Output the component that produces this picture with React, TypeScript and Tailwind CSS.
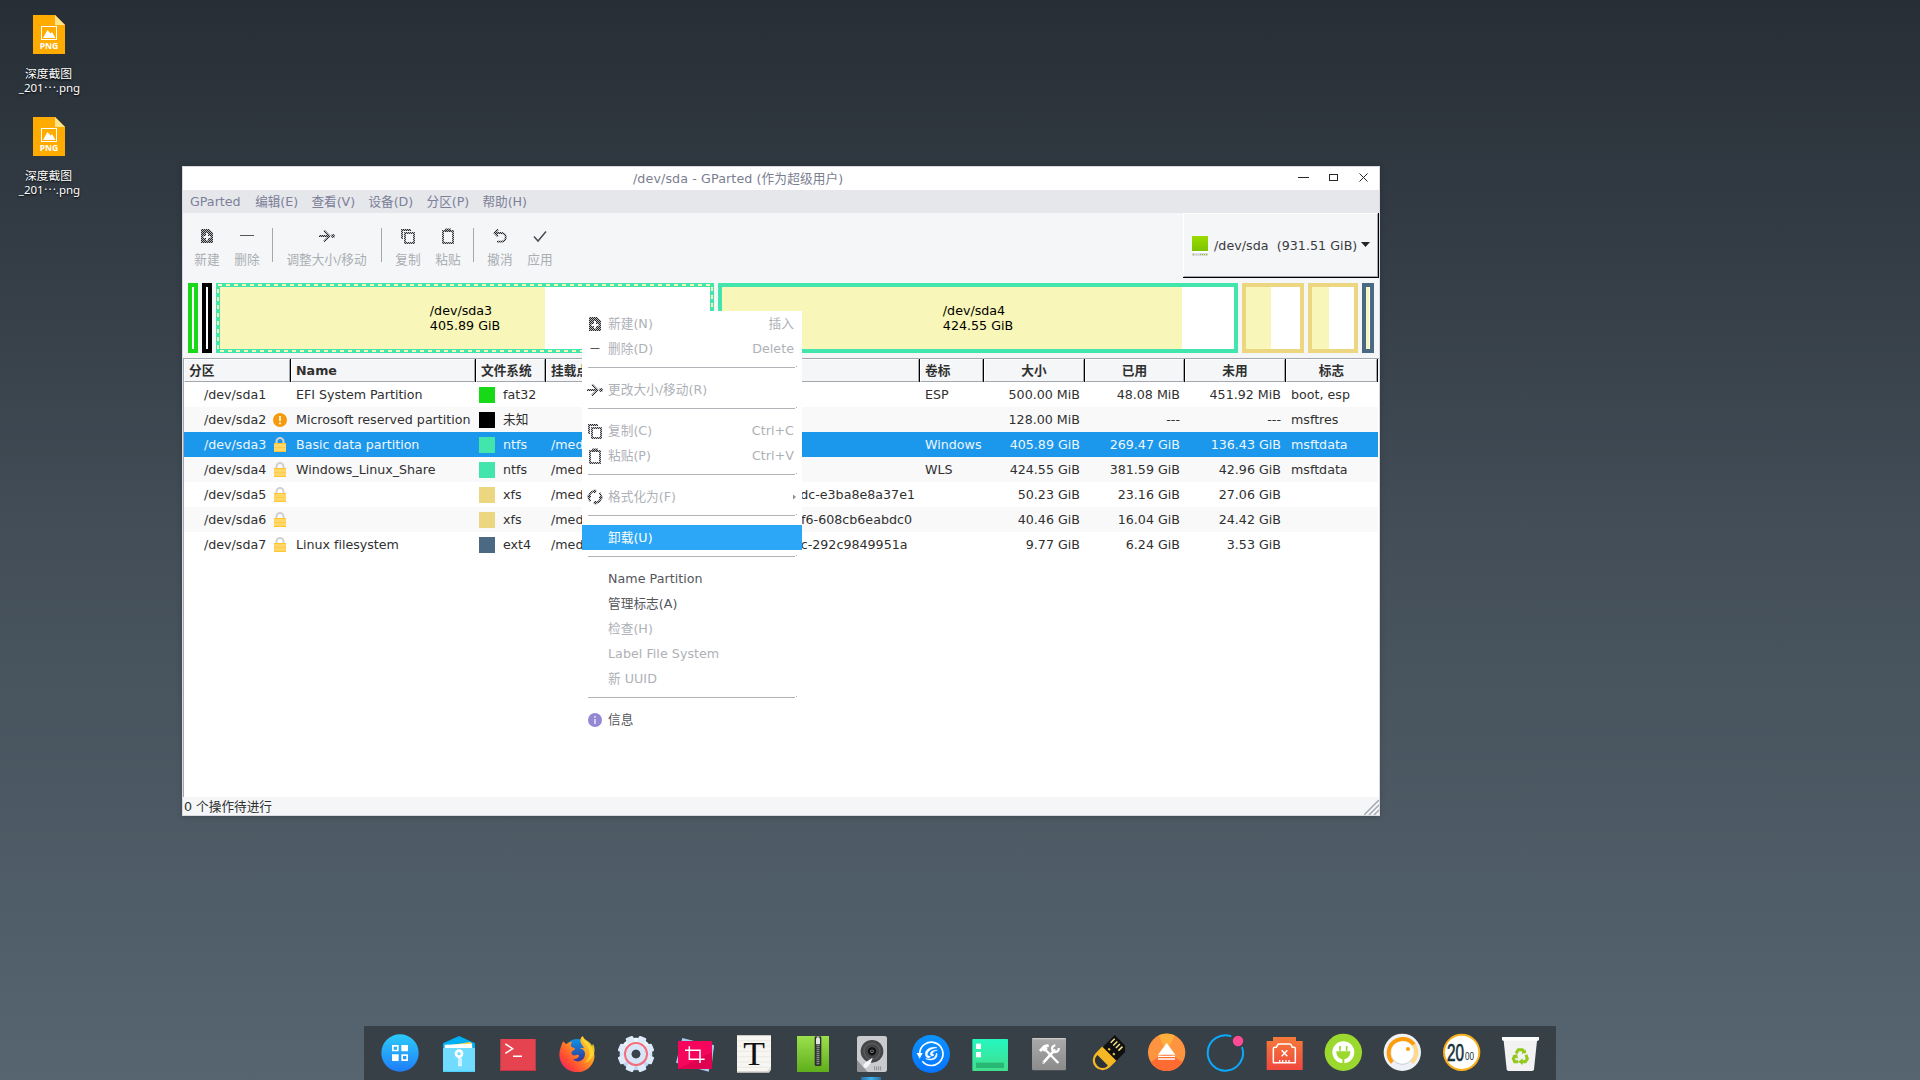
import React from "react";

const UI = "font-['DejaVu_Sans','Noto_Sans_CJK_SC',sans-serif] text-[12.67px]";

/* ---------- small icons ---------- */

function DitherDefs() {
  return (
    <svg className="absolute size-0">
      <defs>
        <pattern id="dither" width="2" height="2" patternUnits="userSpaceOnUse">
          <rect width="1" height="1" fill="#26262d" />
          <rect x="1" y="1" width="1" height="1" fill="#26262d" />
          <rect x="1" width="1" height="1" fill="#26262d" opacity=".3" />
          <rect y="1" width="1" height="1" fill="#26262d" opacity=".3" />
        </pattern>
      </defs>
    </svg>
  );
}

type Glyph = "new" | "minus" | "resize" | "copy" | "paste" | "undo" | "check" | "format";

function ToolIcon({ name, small }: { name: Glyph; small?: boolean }) {
  const s = { fill: "none", stroke: "url(#dither)", strokeWidth: 2 };
  return (
    <svg className="block size-4 shrink-0" viewBox="0 0 16 16">
      {name === "new" && (
        <path
          fillRule="evenodd"
          fill="url(#dither)"
          d="M2 1h8l4 4v10H2zM7 5v3H4.500v2H7v2.500h2V10h2.500V8H9V5z"
        />
      )}
      {name === "minus" && <path d={small ? "M3.500 7.500h9" : "M1 7.500h14"} stroke="#55555b" strokeWidth="1" />}
      {name === "resize" && (
        <g>
          <path {...s} strokeWidth="1.800" d="M0 8h10M5 2.500l5.500 5.500L5 13.500" />
          <circle cx="14" cy="8" r="1.900" fill="url(#dither)" />
        </g>
      )}
      {name === "copy" && (
        <g {...s} strokeWidth="1.800">
          <path d="M2 11V2h9" />
          <rect x="5" y="5" width="9" height="10" />
        </g>
      )}
      {name === "paste" && (
        <g {...s} strokeWidth="1.800">
          <rect x="3" y="3" width="10" height="12" />
          <path d="M6 4V1.500h4V4" />
        </g>
      )}
      {name === "undo" && (
        <g {...s} strokeWidth="1.800">
          <path d="M3 5h6.500a4.300 4.300 0 0 1 0 8.600H5M6 1.500L2.500 5 6 8.500" />
        </g>
      )}
      {name === "check" && <path d="M2 8.500l4 4.500L14 3.500" fill="none" stroke="#4c4c52" strokeWidth="1.500" />}
      {name === "format" && (
        <g {...s} strokeWidth="1.900">
          <path d="M3.500 12.200A6 6 0 0 1 8.500 2.200M12.500 3.800A6 6 0 0 1 7.500 13.800" />
          <path d="M7 .5l2 1.700-2 1.700M9 12.100l-2 1.700 2 1.700" strokeWidth="1.300" />
          <path d="M0 7.500h4M12 8.500h4" strokeWidth="1.500" />
        </g>
      )}
    </svg>
  );
}

function Lock() {
  return (
    <svg className="block h-[15px] w-[14px]" viewBox="0 0 14 15">
      <path d="M3.500 7V4.500a3.500 3.500 0 0 1 7 0V7" fill="none" stroke="#d0d0d2" strokeWidth="2" />
      <rect x="1" y="6" width="12" height="9" rx=".5" fill="#ffd768" />
      <path d="M1 6.500h12M1 14.500h12" stroke="#ffc52e" />
      <path d="M1 10.500h12" stroke="#ffca3d" opacity=".7" />
    </svg>
  );
}

function Warn() {
  return (
    <svg className="block size-[14px]" viewBox="0 0 14 14">
      <circle cx="7" cy="7" r="7" fill="#f59a0c" />
      <path d="M7 3v5M7 9.500v1.700" stroke="#fff" strokeWidth="1.700" />
    </svg>
  );
}

/* ---------- desktop ---------- */

function DesktopFile() {
  return (
    <div className="flex w-[98px] flex-col items-center">
      <svg className="block h-[39px] w-8" viewBox="0 0 32 39">
        <path d="M0 0h22l10 10v29H0z" fill="#ffab00" />
        <path d="M22 0l10 10H22z" fill="#ffe48a" />
        <rect x="8.500" y="11.500" width="15" height="13" fill="none" stroke="#fff" />
        <path d="M10 23l4.500-8 3 3.500 1.500-1.500 3.500 6z" fill="#fff" />
        <text x="16" y="34" textAnchor="middle" fill="#fff" fontSize="8.600" fontWeight="700" fontFamily="Noto Sans">
          PNG
        </text>
      </svg>
      <div className="mt-[11px] ml-px text-center font-['Noto_Sans','Noto_Sans_CJK_SC',sans-serif] text-[11.500px] leading-[15px] text-white [text-shadow:0_1px_2px_#000]">
        <div className="relative top-px right-px text-[11.800px]">深度截图</div>
        <div>
          _201<span className="relative -top-1 font-['Noto_Sans_CJK_SC',sans-serif]">⋯</span>.png
        </div>
      </div>
    </div>
  );
}

/* ---------- window parts ---------- */

const menus = ["编辑(E)", "查看(V)", "设备(D)", "分区(P)", "帮助(H)"];

function Tool({ icon, label, w }: { icon: Glyph; label: string; w: string }) {
  return (
    <div className={`flex flex-col items-center ${w}`}>
      <ToolIcon name={icon} />
      <div className="mt-[7px] leading-[17px] whitespace-nowrap">{label}</div>
    </div>
  );
}

function ToolSep() {
  return <div className="h-[34px] w-px bg-[#a3a8b0]" />;
}

function Part({ w, border, used, inner, children }: { w: string; border: string; used?: string; inner?: string; children?: React.ReactNode }) {
  return (
    <div className={`relative h-[70px] border-4 bg-white ${w} ${border}`}>
      <div className={`h-full ${used ?? ""} ${inner ?? "bg-[#f8f6b8]"}`} />
      {children}
    </div>
  );
}

function PartLabel({ a, b }: { a: string; b: string }) {
  return (
    <div className="absolute inset-0 flex items-center justify-center leading-[15px] text-black">
      <div>
        <div>{a}</div>
        <div>{b}</div>
      </div>
    </div>
  );
}

const GRID = "grid grid-cols-[107px_185px_70px_374px_64px_101px_100px_101px_92px]";

const headers: [string, boolean][] = [
  ["分区", false],
  ["Name", false],
  ["文件系统", false],
  ["挂载点", false],
  ["卷标", false],
  ["大小", true],
  ["已用", true],
  ["未用", true],
  ["标志", true],
];

interface Row {
  dev: string;
  icon?: "lock" | "warn";
  name: string;
  color: string;
  fs: string;
  mount?: string;
  tail?: string;
  tailPad?: string;
  label: string;
  size: string;
  used: string;
  free: string;
  flags: string;
}

const rows: Row[] = [
  { dev: "/dev/sda1", name: "EFI System Partition", color: "bg-[#18d918]", fs: "fat32", label: "ESP", size: "500.00 MiB", used: "48.08 MiB", free: "451.92 MiB", flags: "boot, esp" },
  { dev: "/dev/sda2", icon: "warn", name: "Microsoft reserved partition", color: "bg-black", fs: "未知", label: "", size: "128.00 MiB", used: "---", free: "---", flags: "msftres" },
  { dev: "/dev/sda3", icon: "lock", name: "Basic data partition", color: "bg-[#42e5ac]", fs: "ntfs", mount: "/media", label: "Windows", size: "405.89 GiB", used: "269.47 GiB", free: "136.43 GiB", flags: "msftdata" },
  { dev: "/dev/sda4", icon: "lock", name: "Windows_Linux_Share", color: "bg-[#42e5ac]", fs: "ntfs", mount: "/media", label: "WLS", size: "424.55 GiB", used: "381.59 GiB", free: "42.96 GiB", flags: "msftdata" },
  { dev: "/dev/sda5", icon: "lock", name: "", color: "bg-[#edd680]", fs: "xfs", mount: "/media", tail: "dc-e3ba8e8a37e1", tailPad: "pr-[5px]", label: "", size: "50.23 GiB", used: "23.16 GiB", free: "27.06 GiB", flags: "" },
  { dev: "/dev/sda6", icon: "lock", name: "", color: "bg-[#edd680]", fs: "xfs", mount: "/media", tail: "f6-608cb6eabdc0", tailPad: "pr-[8px]", label: "", size: "40.46 GiB", used: "16.04 GiB", free: "24.42 GiB", flags: "" },
  { dev: "/dev/sda7", icon: "lock", name: "Linux filesystem", color: "bg-[#4b6983]", fs: "ext4", mount: "/media", tail: "c-292c9849951a", tailPad: "pr-[12.500px]", label: "", size: "9.77 GiB", used: "6.24 GiB", free: "3.53 GiB", flags: "" },
];

function TableRow({ r, i }: { r: Row; i: number }) {
  const tone = i === 2 ? "bg-[#1b98ec] text-[#eef6fd]" : i % 2 ? "bg-[#f9f9fa] text-[#303030]" : "bg-white text-[#303030]";
  return (
    <div className={`${GRID} h-[25px] items-center whitespace-nowrap leading-[25px] ${tone}`}>
      <div className="flex items-center pl-5">
        <span className="w-[69px]">{r.dev}</span>
        {r.icon === "lock" && <Lock />}
        {r.icon === "warn" && <Warn />}
      </div>
      <div className="pl-[5px] tracking-[-0.020px]">{r.name}</div>
      <div className="flex h-[25px] items-center pl-[3px]">
        <span className={`mr-2 size-4 ${r.color}`} />
        <span>{r.fs}</span>
      </div>
      <div className="flex justify-between pl-[5px]">
        <span>{r.mount}</span>
        <span className={r.tailPad}>{r.tail}</span>
      </div>
      <div className="pl-[5px]">{r.label}</div>
      <div className="pr-[5px] text-right">{r.size}</div>
      <div className="pr-[5px] text-right">{r.used}</div>
      <div className="pr-[5px] text-right">{r.free}</div>
      <div className="pl-[5px]">{r.flags}</div>
    </div>
  );
}

/* ---------- context menu ---------- */

function MenuSep() {
  return (
    <div className="flex h-4 items-start pt-[5px] pl-[6px]">
      <div className="mt-px h-px w-[207px] bg-[#b1b4b9]" />
      <div className="ml-px size-px bg-[#b1b4b9]" />
    </div>
  );
}

function MenuRow({ icon, label, accel, state = "off", sub, info }: { icon?: Glyph; label: string; accel?: string; state?: "off" | "on" | "hot"; sub?: boolean; info?: boolean }) {
  const tone = state === "hot" ? "bg-[#2ca7f8] text-white" : state === "on" ? "text-[#55565c]" : "text-[#aeb1b7]";
  return (
    <div className={`flex h-[25px] items-center pr-2 pl-[5px] leading-[25px] tracking-[0.040px] whitespace-nowrap ${tone}`}>
      <span className="mr-[5px] flex w-4 justify-center">
        {icon && <ToolIcon name={icon} small />}
        {info && (
          <svg className="block size-[14px]" viewBox="0 0 14 14">
            <circle cx="7" cy="7" r="7" fill="#9487d4" />
            <path d="M7 3v1.700M7 6v5" stroke="#e4e0f7" strokeWidth="1.600" />
          </svg>
        )}
      </span>
      <span className="flex-1">{label}</span>
      <span>{accel}</span>
      {sub && (
        <svg className="-mr-[3px] block h-[6px] w-1" viewBox="0 0 4 6">
          <path d="M0 .5L3 3 0 5.500z" fill="#8d8f95" />
        </svg>
      )}
    </div>
  );
}

function ContextMenu() {
  return (
    <div className="absolute top-[144px] left-[399px] h-[423px] w-[220px] bg-white">
      <MenuRow icon="new" label="新建(N)" accel="插入" />
      <MenuRow icon="minus" label="删除(D)" accel="Delete" />
      <MenuSep />
      <MenuRow icon="resize" label="更改大小/移动(R)" />
      <MenuSep />
      <MenuRow icon="copy" label="复制(C)" accel="Ctrl+C" />
      <MenuRow icon="paste" label="粘贴(P)" accel="Ctrl+V" />
      <MenuSep />
      <MenuRow icon="format" label="格式化为(F)" sub />
      <MenuSep />
      <MenuRow label="卸载(U)" state="hot" />
      <MenuSep />
      <MenuRow label="Name Partition" state="on" />
      <MenuRow label="管理标志(A)" state="on" />
      <MenuRow label="检查(H)" />
      <MenuRow label="Label File System" />
      <MenuRow label="新 UUID" />
      <MenuSep />
      <MenuRow info label="信息" state="on" />
    </div>
  );
}

/* ---------- window ---------- */

function GPartedWindow() {
  return (
    <div className={`relative mt-[166px] ml-[182px] flex h-[650px] w-[1198px] flex-col border border-[#d9d9e2] bg-[#f4f6f8] shadow-[0_1px_6px_rgba(0,0,0,0.18)] ${UI}`}>
      <div className="flex h-[23px] items-center justify-between bg-white pr-[11px] pl-[450px] text-[#7a7e90]">
        <span className="leading-[23px] tracking-[0.11px] whitespace-pre">/dev/sda - GParted (作为超级用户)</span>
        <svg className="block h-[11px] w-[71px]" viewBox="0 0 71 11" fill="none" stroke="#26262a">
          <path d="M1 4.500h11" />
          <rect x="32.500" y="1.500" width="8" height="6" />
          <path d="M62.500 .5l8 8M70.500 .5l-8 8" />
        </svg>
      </div>
      <div className="flex h-[23px] items-center bg-[#e6e7eb] pl-[7px] leading-[23px] text-[#7c8099]">
        <span className="mr-[14.500px]">GParted</span>
        <div className="flex gap-[13.400px] tracking-[-0.050px]">
          {menus.map((m) => (
            <span key={m}>{m}</span>
          ))}
        </div>
      </div>

      <div className="flex h-[65px] justify-between">
        <div className="flex pt-[15px] pl-[11px] text-[#abaeb3]">
          <Tool icon="new" label="新建" w="w-[26px]" />
          <Tool icon="minus" label="删除" w="ml-[14px] w-[26px]" />
          <div className="ml-3"><ToolSep /></div>
          <Tool icon="resize" label="调整大小/移动" w="ml-[12px] w-[83px]" />
          <div className="ml-[13px]"><ToolSep /></div>
          <Tool icon="copy" label="复制" w="ml-[13px] w-[26px]" />
          <Tool icon="paste" label="粘贴" w="ml-[14px] w-[26px]" />
          <div className="ml-3"><ToolSep /></div>
          <Tool icon="undo" label="撤消" w="ml-[13px] w-[26px]" />
          <Tool icon="check" label="应用" w="ml-[14px] w-[26px]" />
        </div>
        <div className="h-[65px] w-[196px] border-r border-b border-black">
          <div className="flex h-full items-center border border-t-white border-r-[#a3a8b0] border-b-[#a3a8b0] border-l-white pt-px pl-2 text-[#3a3a3e]">
            <svg className="block h-5 w-4" viewBox="0 0 16 20">
              <defs>
                <linearGradient id="drv" x1="0" y1="0" x2="0" y2="1">
                  <stop offset="0" stopColor="#9bdc00" />
                  <stop offset="1" stopColor="#7cc400" />
                </linearGradient>
              </defs>
              <rect width="16" height="15" fill="url(#drv)" />
              <rect y="15" width="16" height="2" fill="#fff" />
              <rect y="17" width="16" height="3" fill="#d9dbdc" />
              <path d="M1 18.500h1M8 18.500h1M10 18.500h1M12 18.500h1M14 18.500h1" stroke="#7cc400" />
            </svg>
            <span className="ml-[6px] tracking-[0.040px] whitespace-pre">{"/dev/sda  (931.51 GiB)"}</span>
            <svg className="mb-[3px] ml-[4px] block h-[5px] w-[9px] shrink-0" viewBox="0 0 9 5">
              <path d="M0 0h9L4.500 5z" fill="#26262a" />
            </svg>
          </div>
        </div>
      </div>

      <div className="flex gap-1 pt-[5px] pl-[5px]">
        <Part w="w-[10px]" border="border-[#18d918]" inner="bg-white" />
        <Part w="w-[10px]" border="border-black" inner="bg-white" />
        <Part w="w-[498px]" border="border-[#42e5ac]" used="w-[325px]">
          <svg className="absolute -top-1 -left-1 block h-[70px] w-[498px]" viewBox="0 0 498 70">
            <rect x="2" y="2" width="494" height="66" fill="none" stroke="#f8f6b8" strokeWidth="2" strokeDasharray="4 4" />
          </svg>
          <PartLabel a="/dev/sda3" b="405.89 GiB" />
        </Part>
        <Part w="w-[520px]" border="border-[#42e5ac]" used="w-[460px]">
          <PartLabel a="/dev/sda4" b="424.55 GiB" />
        </Part>
        <Part w="w-[62px]" border="border-[#edd680]" used="w-[25px]" />
        <Part w="w-[50px]" border="border-[#edd680]" used="w-[17px]" />
        <Part w="w-[12px]" border="border-[#4b6983]" used="w-[3px]" />
      </div>

      <div className="mt-[5px] h-[439px] border-t border-l border-[#a3a8b0] bg-white">
        <div className={`${GRID} h-[23px] bg-[#f4f6f8] font-bold text-[#303030]`}>
          {headers.map(([h, center]) => (
            <div key={h} className="overflow-hidden border-r border-black">
              <div className={`h-[23px] border border-t-white border-r-[#a3a8b0] border-b-[#a3a8b0] border-l-white leading-[22px] whitespace-nowrap ${center ? "text-center" : "pl-1"}`}>
                {h}
              </div>
            </div>
          ))}
        </div>
        {rows.map((r, i) => (
          <div key={r.dev} className="w-[1194px]">
            <TableRow r={r} i={i} />
          </div>
        ))}
      </div>

      <div className="flex h-[18px] justify-between pl-px text-[#303030]">
        <span className="leading-[19px]">0 个操作待进行</span>
        <svg className="mt-[3px] block size-[15px]" viewBox="0 0 15 15">
          <path d="M0 15L15 0M5 15L15 5M10 15l5-5" stroke="#a3a8b0" strokeWidth="1.500" />
        </svg>
      </div>

      <ContextMenu />
    </div>
  );
}

/* ---------- dock ---------- */

function petals(n: number, cx: number, cy: number) {
  return Array.from({ length: n }, (_, k) => `rotate(${(k * 360) / n} ${cx} ${cy})`);
}

const dock: { box: string; active?: boolean; art: React.ReactNode }[] = [
  {
    box: "30 18 177 162",
    art: (
      <g>
        <linearGradient id="launch" x1="0" y1="0" x2="0" y2="1">
          <stop offset="0" stopColor="#2ccbf8" />
          <stop offset="1" stopColor="#1f7dfb" />
        </linearGradient>
        <circle cx="120" cy="99" r="56" fill="url(#launch)" />
        <path fill="#fff" fillRule="evenodd" d="M96 75h20v19H96zm5 5v9h10v-9zM124 75h20v19h-20zM96 103h20v20H96zM124 103h20v20h-20zm5 5v10h10v-10z" />
      </g>
    ),
  },
  {
    box: "207 18 177 162",
    art: (
      <g>
        <path d="M249 70l48-22 48 22v84h-96z" fill="#00b0f5" />
        <path d="M256 78l74-12 6 4 6 80z" fill="#ffd24d" />
        <path d="M254 74l82-3v20h-82z" fill="#fff" />
        <path d="M249 84h96v72h-96z" fill="#71dcff" />
        <path d="M249 152h96v4h-96z" fill="#4fd0fa" />
        <path d="M297 110v26h6v-22" fill="none" stroke="#dff7ff" strokeWidth="5" />
        <circle cx="297" cy="101" r="9" fill="none" stroke="#fff" strokeWidth="8" />
      </g>
    ),
  },
  {
    box: "384 18 177 162",
    art: (
      <g>
        <rect x="421" y="57" width="106" height="96" fill="#e5434f" />
        <rect x="421" y="150" width="106" height="3" fill="#c73340" />
        <path d="M436 72l22 14-22 14M459 109h27" fill="none" stroke="#fff" strokeWidth="4.500" />
      </g>
    ),
  },
  {
    box: "561 18 177 162",
    art: (
      <g>
        <linearGradient id="fox" x1="1" y1="0" x2="0" y2="1">
          <stop offset="0" stopColor="#fff04a" />
          <stop offset=".4" stopColor="#ff9a1f" />
          <stop offset=".75" stopColor="#ff4437" />
          <stop offset="1" stopColor="#e31587" />
        </linearGradient>
        <linearGradient id="globe" x1="0" y1="0" x2="0" y2="1">
          <stop offset="0" stopColor="#0a93e8" />
          <stop offset="1" stopColor="#3c2c8c" />
        </linearGradient>
        <circle cx="651" cy="94" r="37" fill="url(#globe)" />
        <path
          fill="url(#fox)"
          d="M609 64c4 3 6 7 10 8 7-5 12-7 18-7-4 5-5 8-4 14 4 5 12 4 12 8-1 4-9 5-11 11 1 8 8 10 15 7 7-3 9 1 7 5-5 6-11 8-17 6 8 12 27 11 34-4 6-14-1-25-14-27 5-3 9-2 13 0-3-10-11-12-11-24 0-7 4-11 8-13 0 12 11 15 20 26 15 19 19 36 9 55-12 23-33 29-54 27-27-4-45-24-46-51 0-16 6-27 11-41z"
        />
        <path d="M668 48c-5 14 8 20 15 31 12 20 4 40-11 50 28-9 39-36 27-58-1 3-2 5-3 7-5-15-24-17-28-30z" fill="#ffd92b" opacity=".85" />
      </g>
    ),
  },
  {
    box: "738 18 177 162",
    art: (
      <g>
        <linearGradient id="gear" x1="0" y1="0" x2="0" y2="1">
          <stop offset="0" stopColor="#f0f8ff" />
          <stop offset="1" stopColor="#b9d0f2" />
        </linearGradient>
        <circle cx="828" cy="102" r="35" fill="none" stroke="url(#gear)" strokeWidth="28" />
        {petals(8, 828, 102).map((t) => (
          <rect key={t} x="816" y="47" width="24" height="20" rx="4" fill="#dceafa" transform={`${t} rotate(22.500 828 102)`} />
        ))}
        <circle cx="828" cy="102" r="33" fill="none" stroke="#f76c78" strokeWidth="6" />
        <circle cx="828" cy="102" r="21" fill="none" stroke="#d8e5f7" strokeWidth="16" />
        <circle cx="828" cy="102" r="13" fill="#39434c" />
      </g>
    ),
  },
  {
    box: "915 18 177 162",
    art: (
      <g>
        <path d="M967 54l95 24-16 77-98-27z" fill="#a7c9ef" />
        <path d="M1062 76l-8 70-20-80z" fill="#a7c9ef" />
        <rect x="954" y="63" width="102" height="84" rx="2" fill="#f5055c" />
        <path d="M954 147l102-50v50z" fill="#df0050" />
        <path d="M988 79v39h46M975 91h45v38" fill="none" stroke="#fff" strokeWidth="4.500" />
      </g>
    ),
  },
  {
    box: "-78 18 177 162",
    art: (
      <g>
        <path d="M-39 46H63v98l-10 12H-39z" fill="#f7f6f2" />
        <path d="M-39 62H63M-39 78H63M-39 94H63M-39 110H63M-39 126H63M-39 142H63" stroke="#e6e4dc" strokeWidth="2" />
        <path d="M-39 153H51L63 142V150l-6 8H-39z" fill="#dad8d2" />
        <text x="12" y="136" textAnchor="middle" fontFamily="Liberation Serif" fontSize="101" fill="#101010" textLength="65" lengthAdjust="spacingAndGlyphs">
          T
        </text>
      </g>
    ),
  },
  {
    box: "99 18 177 162",
    art: (
      <g>
        <linearGradient id="zip" x1="0" y1="0" x2="0" y2="1">
          <stop offset="0" stopColor="#9be04c" />
          <stop offset="1" stopColor="#5fae1b" />
        </linearGradient>
        <rect x="141" y="48" width="96" height="108" fill="url(#zip)" />
        <rect x="194" y="49" width="20" height="89" rx="4" fill="#2e3130" />
        <path d="M204 76v58" stroke="#a5a8a8" strokeWidth="9" strokeDasharray="3 3" />
        <rect x="198" y="54" width="12" height="19" rx="2" fill="#e3e3e3" />
        <rect x="200" y="49" width="8" height="5" fill="#bbb" />
      </g>
    ),
  },
  {
    box: "276 18 177 162",
    active: true,
    art: (
      <g>
        <rect x="321" y="48" width="90" height="108" rx="7" fill="#c9cbce" />
        <path d="M321 120l32 36h-25a7 7 0 0 1-7-7z" fill="#8f9194" />
        <circle cx="366" cy="94" r="34" fill="#434547" />
        <circle cx="366" cy="94" r="24" fill="none" stroke="#56585a" strokeWidth="5" />
        <circle cx="366" cy="94" r="9" fill="#8b8d8f" stroke="#111" strokeWidth="7" />
        <circle cx="366" cy="94" r="3" fill="#111" />
        <path d="M368 113c-10 6-19 11-27 20a7 7 0 0 0 9 10c9-7 14-18 18-30z" fill="#f4f5f6" />
        <path d="M374 139v12M380 139v12M386 139v12M392 139v12" stroke="#8c8e91" strokeWidth="3" />
      </g>
    ),
  },
  {
    box: "453 18 177 162",
    art: (
      <g>
        <linearGradient id="restore" x1="0" y1="0" x2="0" y2="1">
          <stop offset="0" stopColor="#0b93ff" />
          <stop offset="1" stopColor="#0574ff" />
        </linearGradient>
        <circle cx="543" cy="102" r="57" fill="url(#restore)" />
        <path d="M509 99a35 35 0 1 1 8 25" fill="none" stroke="#fff" strokeWidth="5" />
        <path d="M500 99h18l-9 17z" fill="#fff" />
        <g fill="#fff" stroke="#fff" strokeWidth="1.500">
          <path d="M561 83c-22-5-39 8-34 24 3 8 12 9 15 2-10 1-13-7-7-14 6-8 15-11 26-12z" />
          <path d="M562 91c-13-1-22 4-21 12 1 6 9 7 11 1-6 0-6-5-2-8 3-3 7-4 12-5z" />
          <path d="M560 99c6 13-9 28-33 17 13 3 24 0 28-6 2-3 3-7 5-11z" />
        </g>
      </g>
    ),
  },
  {
    box: "630 18 177 162",
    art: (
      <g>
        <linearGradient id="dm" x1="0" y1="0" x2="0" y2="1">
          <stop offset="0" stopColor="#25f7c0" />
          <stop offset="1" stopColor="#42de8c" />
        </linearGradient>
        <rect x="667" y="57" width="107" height="96" rx="2" fill="url(#dm)" />
        <rect x="678" y="71" width="15" height="16" fill="#fff" />
        <rect x="678" y="96" width="15" height="16" fill="#fff" />
        <rect x="678" y="128" width="84" height="16" fill="#28b873" />
      </g>
    ),
  },
  {
    box: "807 18 177 162",
    art: (
      <g>
        <linearGradient id="tools" x1="0" y1="0" x2="0" y2="1">
          <stop offset="0" stopColor="#aaa" />
          <stop offset="1" stopColor="#8b8b8b" />
        </linearGradient>
        <rect x="846" y="54" width="102" height="97" rx="4" fill="url(#tools)" />
        <rect x="847" y="54" width="100" height="4" rx="2" fill="#c9c9c9" />
        <g fill="none" stroke="#fff">
          <path d="M880 128l33-37" strokeWidth="8" strokeLinecap="round" />
          <path d="M926 84a10 10 0 1 1-10-8" strokeWidth="7" />
          <path d="M887 90l38 39" strokeWidth="7" />
          <path d="M870 93l14-14 12-3M880 92l10-10" strokeWidth="9" />
        </g>
        <circle cx="879" cy="128" r="2.500" fill="#999" />
      </g>
    ),
  },
  {
    box: "984 18 177 162",
    art: (
      <g transform="rotate(45 1075 101)">
        <path d="M1049 48h44l14 14v43h-58z" fill="#101010" />
        <path d="M1047 99h60v28a30 30 0 0 1-60 0z" fill="#f5b825" />
        <path d="M1055 131a22 19 0 0 0 44 0v-4h-44z" fill="#2d3236" />
        <path d="M1057 56v17M1068 56v17M1079 56v17M1090 56v17" stroke="#f3e491" strokeWidth="4.500" />
        <path d="M1064 87h7v6h-7zM1084 87h7v6h-7z" fill="#e9c94c" />
      </g>
    ),
  },
  {
    box: "-9 18 177 162",
    art: (
      <g>
        <circle cx="80" cy="97" r="56" fill="#ff9440" />
        <path d="M80 97L56 46a56 56 0 0 1 48 0z" fill="#ffb03c" />
        <path d="M80 97L32 126a56 56 0 0 0 96 0z" fill="#ff6b30" />
        <path d="M80 69l26 35H54zM54 107h51v4H54zM54 115h51v4H54z" fill="#fff" />
      </g>
    ),
  },
  {
    box: "168 18 177 162",
    art: (
      <g>
        <path d="M274 49a53 53 0 1 0 32 32" fill="none" stroke="#0aa9fb" strokeWidth="6" />
        <circle cx="294" cy="63" r="15.500" fill="#ff4b96" />
      </g>
    ),
  },
  {
    box: "345 18 177 162",
    art: (
      <g>
        <linearGradient id="cap" x1="0" y1="0" x2="0" y2="1">
          <stop offset="0" stopColor="#f47b39" />
          <stop offset="1" stopColor="#f1473f" />
        </linearGradient>
        <path d="M399 51h69v12h20v87H380V63h19z" fill="url(#cap)" />
        <path d="M400 128V86q0-4 4-4h5l4-8q1-2 4-2h32q3 0 4 2l4 8h5q4 0 4 4v42z" fill="none" stroke="#fff" strokeWidth="4.500" strokeLinejoin="round" />
        <path d="M419 127v-7M428 127v-7M438 127v-7M447 127v-7" stroke="#fff" strokeWidth="4" />
        <path d="M425 91l17 18M442 91l-17 18" stroke="#fff" strokeWidth="4.500" />
      </g>
    ),
  },
  {
    box: "522 18 177 162",
    art: (
      <g>
        <circle cx="610" cy="97" r="56" fill="#9bd92f" />
        <circle cx="610" cy="97" r="33" fill="#fff" />
        <path d="M600 78v14M620 78v14" stroke="#9bd92f" strokeWidth="5" />
        <path d="M589 94h42c0 14-8 22-18 24v14h-6v-14c-10-2-18-10-18-24z" fill="#9bd92f" />
      </g>
    ),
  },
  {
    box: "699 18 177 162",
    art: (
      <g>
        <circle cx="787" cy="97" r="56" fill="#eef1f6" />
        <path d="M757 127a42 42 0 1 1 65-53" fill="none" stroke="#ff9c0a" strokeWidth="12" />
        <path d="M822 74a42 42 0 0 1-7 54" fill="none" stroke="#ffd98a" strokeWidth="12" />
        <circle cx="787" cy="101" r="33" fill="#c8ccd4" />
        <circle cx="787" cy="98" r="33" fill="#fff" />
        <circle cx="804" cy="87" r="6" fill="#ff9c0a" />
      </g>
    ),
  },
  {
    box: "876 18 177 162",
    art: (
      <g fontFamily="Liberation Sans" fill="#12303a">
        <circle cx="965" cy="97" r="53" fill="#fff" stroke="#f8b01c" strokeWidth="6" />
        <text x="921" y="122" fontSize="69" textLength="51" lengthAdjust="spacingAndGlyphs" stroke="#12303a" strokeWidth="2">
          20
        </text>
        <text x="975" y="121" fontSize="34" textLength="27" lengthAdjust="spacingAndGlyphs">
          00
        </text>
      </g>
    ),
  },
  {
    box: "1053 18 177 162",
    art: (
      <g>
        <path d="M1086 51h111v7q0 5-6 5h-99q-6 0-6-5z" fill="#fbfbfb" />
        <path d="M1091 62h100l-9 86q-1 5-6 5h-70q-5 0-6-5z" fill="#f2f2f2" />
        <g fill="none" stroke="#93c81c" strokeWidth="9">
          <path d="M1128 100l7-11h12l5 9" />
          <path d="M1158 104l4 12-6 9h-11" />
          <path d="M1135 125h-11l-4-9 6-10" />
        </g>
        <path d="M1145 101l14-2-3-12zM1148 115v20l-13-10zM1116 108l15-6 3 14z" fill="#93c81c" />
      </g>
    ),
  },
];

function Dock() {
  return (
    <div className="flex h-[54px] w-[1192px] bg-[#384047] px-[6px]">
      {dock.map((d, i) => (
        <div key={i} className="relative h-[54px] w-[59px]">
          <svg className="block h-[54px] w-[59px]" viewBox={d.box}>
            {d.art}
          </svg>
          {d.active && <div className="absolute bottom-0 left-[19px] h-[3px] w-5 bg-linear-to-r from-[#2c6f9e] via-[#3fb0f0] to-[#2c6f9e]" />}
        </div>
      ))}
    </div>
  );
}

export default function App() {
  return (
    <div className="relative flex h-[1080px] w-[1920px] flex-col overflow-hidden bg-linear-to-b from-[#272e36] via-[#434e58] to-[#566570]">
      <DitherDefs />
      <div className="absolute top-[15px] left-0 flex flex-col gap-[22px]">
        <DesktopFile />
        <DesktopFile />
      </div>
      <GPartedWindow />
      <div className="mt-auto flex justify-center">
        <Dock />
      </div>
    </div>
  );
}
